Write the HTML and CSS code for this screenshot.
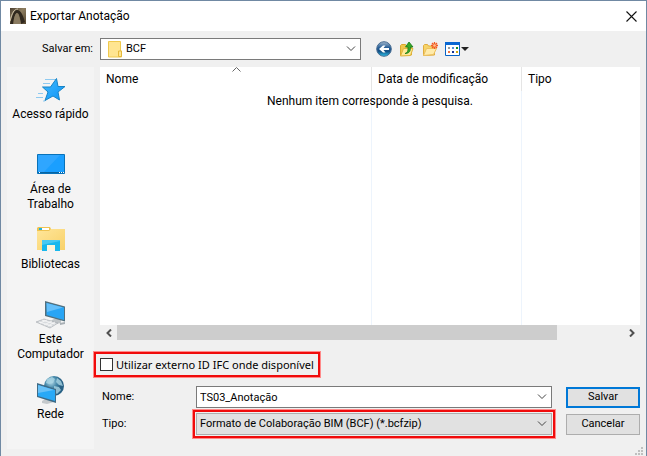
FILE: index.html
```html
<!DOCTYPE html>
<html lang="pt">
<head>
<meta charset="utf-8">
<meta name="viewport" content="width=device-width, initial-scale=1">
<title>Exportar Anotação</title>
<link rel="stylesheet" href="styles.css">
</head>
<body>
<form class="dialog">
  <header class="titlebar">
    <svg class="app-icon" width="16" height="16" viewBox="0 0 16 16" aria-hidden="true">
      <defs><linearGradient id="app" x1="0" x2="1" y1="0" y2="1"><stop offset="0" stop-color="#4a3f31"/><stop offset=".45" stop-color="#8d7d60"/><stop offset="1" stop-color="#54452f"/></linearGradient></defs>
      <path d="M0 0h16v16H0z" fill="url(#app)"/>
      <path d="M7 2c4 0 6 5 8 12l-4 2C10 9 9 5 7 5S4 10 3 16H0C2 8 4 2 7 2z" fill="#30281e"/>
      <path d="M0 13C2 5 4 1 8 1" fill="none" stroke="#d0c4aa"/>
      <path d="M7 5c2 2 3 6 4 11H4C4 10 5 6 7 5z" fill="#8a7b61"/>
    </svg>
    <h1 class="title">Exportar Anotação</h1>
    <button type="button" class="close" aria-label="Fechar">
      <svg width="11" height="11" viewBox="0 0 11 11"><path d="M.5.5l10 10M10.500.500l-10 10" fill="none" stroke="#111" stroke-width="1.100"/></svg>
    </button>
  </header>

  <div class="lookin">
    <label class="lookin-label" for="folder">Salvar em:</label>
    <div class="combo combo-folder">
      <svg class="folder-icon" width="14" height="17" viewBox="0 0 14 17" aria-hidden="true"><path d="M.5.5h12v9.500h1v6H.5z" fill="#ffe591" stroke="#efc94e"/><path d="M10.500 15.500V10h3v5.500z" fill="#ffe591" stroke="#e6b93a"/></svg>
      <select id="folder" class="field"><option>BCF</option></select>
      <svg class="chevron" width="10" height="6" viewBox="0 0 10 6" aria-hidden="true"><path d="M1 .5l4 4 4-4"/></svg>
    </div>
    <div class="tools">
      <button type="button" class="tool" aria-label="Voltar">
        <svg width="16" height="16" viewBox="0 0 16 16">
          <defs><linearGradient id="back" x2="0" y2="1"><stop offset="0" stop-color="#a4b8cc"/><stop offset=".4" stop-color="#285f98"/><stop offset=".65" stop-color="#124d82"/><stop offset="1" stop-color="#2cc4ec"/></linearGradient></defs>
          <circle cx="8" cy="8" r="7.300" fill="url(#back)" stroke="#476b91"/>
          <path d="M13 7H7.500l2-2.500H7L3 8l4 3.500h2.500L7.500 9H13z" fill="#fff"/>
        </svg>
      </button>
      <button type="button" class="tool" aria-label="Um nível acima">
        <svg width="16" height="16" viewBox="0 0 16 16">
          <path d="M1.500 14.500v-10l1-1h4l1 1.500h5v9z" fill="#f0c64b" stroke="#d8a92d"/>
          <path d="M1.500 15l3-7.500H14l-2.500 7z" fill="#ffe996" stroke="#dfb43d"/>
          <path d="M6 12.500c3-1 3-3 3-6.500H6.500L10 1l4 5h-2.500c0 4-1 6.500-5.500 6.500z" fill="#35a929" stroke="#187818" stroke-width=".8"/>
        </svg>
      </button>
      <button type="button" class="tool" aria-label="Criar nova pasta">
        <svg width="16" height="16" viewBox="0 0 16 16">
          <path d="M1.500 14.500v-10l1-1h3l1 1.500h6v9z" fill="#f6d469" stroke="#e0ac3f"/>
          <path d="M1.500 14.500l3-7h10l-3 6z" fill="#ffebab" stroke="#ecc160"/>
          <path d="M12.500 1v7M9 4.500h7M10 2l5 5M15 2l-5 5" stroke="#f25a22" stroke-width="1.300"/><circle cx="12.500" cy="4.500" r="1.300" fill="#ffc591"/>
        </svg>
      </button>
      <button type="button" class="tool tool-view" aria-label="Menu Exibir">
        <svg width="24" height="16" viewBox="0 0 24 16">
          <path d="M.5 1.500h14v13H.5z" fill="#fff" stroke="#0863c6"/><path d="M0 1h15v3H0z" fill="#0967d2"/>
          <path d="M3 6h2v2H3z" fill="#999"/><path d="M7 6h2v2H7z" fill="#508edc"/><path d="M11 6h2v2h-2z" fill="#148c28"/>
          <path d="M3 10h2v2H3z" fill="#ed7443"/><path d="M7 10h2v2H7z" fill="#163494"/><path d="M11 10h2v2h-2z" fill="#d2a90e"/>
          <path d="M16 6h8l-4 4z" fill="#222"/>
        </svg>
      </button>
    </div>
  </div>

  <div class="main">
    <nav class="places" aria-label="Locais">
      <button type="button" class="place">
        <svg width="32" height="32" viewBox="0 0 32 32" aria-hidden="true">
          <defs><linearGradient id="blue" x2="1" y2="1"><stop offset="0" stop-color="#45b9f7"/><stop offset=".5" stop-color="#27a7fb"/><stop offset="1" stop-color="#0d93f4"/></linearGradient></defs>
          <path d="M10 5.500h11M8 9.500h7M3 19.500h5M1 23.500h7M8 27h2" stroke="#8fcaf0"/>
          <path d="M21.500 4.500l1.500 8h7l-7 5.500 1.500 8-6.500-4-8 4.500 3-8.500-5.500-5h8z" fill="url(#blue)" stroke="#1784c6"/>
        </svg>
        <span>Acesso rápido</span>
      </button>
      <button type="button" class="place">
        <svg width="32" height="32" viewBox="0 0 32 32" aria-hidden="true">
          <path d="M2.500 5.500h27v19h-27z" fill="#1a9fff" stroke="#0872b9"/><path d="M3 6h22L9 23H3z" fill="#43adff" opacity=".5"/>
          <path d="M3 23h26v1H3z" fill="#0864a1"/><path d="M4 23h1v1H4zm20 0h1v1h-1zm2 0h1v1h-1zm2 0h1v1h-1z" fill="#fff"/>
        </svg>
        <span>Área de Trabalho</span>
      </button>
      <button type="button" class="place">
        <svg width="32" height="32" viewBox="0 0 32 32" aria-hidden="true">
          <defs><linearGradient id="lib" x2="1" y2="1"><stop offset="0" stop-color="#ffe69a"/><stop offset="1" stop-color="#f8d169"/></linearGradient></defs>
          <path d="M2 4l1-1h12l1 2h14v21H2z" fill="#efc351"/><path d="M4 4h10v2H4z" fill="#fff"/><path d="M4 4h3v2H4z" fill="#21b2de"/>
          <path d="M2 7h12l2-2h14v21H2z" fill="url(#lib)"/>
          <path d="M7 16h18v11h-5v-6h-8v6H7z" fill="#18b8ed"/><path d="M12 21h8v5h-8z" fill="#fff5d7"/><path d="M7 16h18v1L7 21z" fill="#48c9f2"/>
        </svg>
        <span>Bibliotecas</span>
      </button>
      <button type="button" class="place">
        <svg width="32" height="32" viewBox="0 0 32 32" aria-hidden="true">
          <path d="M15 22l6-3 5 2v3l-5 1z" fill="#bfc4c7"/>
          <path d="M10 2l20 5.500v15L10 17z" fill="#52707e"/><path d="M11.500 4L29 8.500v12.500L11.500 16z" fill="#28a5f5"/><path d="M11.500 4L28 8.500 12 13z" fill="#64bffa"/>
          <path d="M1 23l8-3 14 4-8 5z" fill="#d8dbde" stroke="#a2a8ac" stroke-width=".6"/><path d="M4 23l13 4M7 21l13 4M5 24l7-3M9 26l8-4M13 27l7-4" stroke="#f8f8f8" stroke-width=".8"/>
          <path d="M25 24l5-1v2l-5 1z" fill="#a8afb4"/>
        </svg>
        <span>Este Computador</span>
      </button>
      <button type="button" class="place">
        <svg width="32" height="32" viewBox="0 0 32 32" aria-hidden="true">
          <defs><radialGradient id="globe" cx=".35" cy=".3"><stop offset="0" stop-color="#b7dcea"/><stop offset=".6" stop-color="#4689aa"/><stop offset="1" stop-color="#286185"/></radialGradient></defs>
          <circle cx="19" cy="12" r="10" fill="url(#globe)"/>
          <path d="M12 5l5-2 3 2-2 4-4 1-3-1zm10-1l4 3 2 5-4-1-3-3zm-3 8l5 1 2 3-4 4-3-2z" fill="#a9d5e4" opacity=".8"/>
          <path d="M7 27l5-3 7 2v2l-7 2-5-1z" fill="#c4c9cc"/>
          <path d="M2 9l19 6v14L2 23z" fill="#3f6b86"/><path d="M3 11l17 5v11L3 22z" fill="#28a9f7"/><path d="M3 11l16 5L3 19z" fill="#68c1f7"/>
        </svg>
        <span>Rede</span>
      </button>
    </nav>

    <div class="content">
      <section class="files">
        <div class="list">
          <table class="table">
            <thead><tr><th class="col-name" scope="col">Nome</th><th class="col-date" scope="col">Data de modificação</th><th scope="col">Tipo</th></tr></thead>
            <tbody><tr><td></td><td></td><td></td></tr></tbody>
          </table>
          <svg class="sort" width="9" height="5" viewBox="0 0 9 5" aria-hidden="true"><path d="M.5 4.500l4-4 4 4" fill="none" stroke="#666"/></svg>
          <p class="empty">Nenhum item corresponde à pesquisa.</p>
        </div>
        <div class="scroll">
          <button type="button" class="scroll-btn" aria-label="Rolar para a esquerda"><svg width="6" height="8" viewBox="0 0 6 8"><path d="M5 .5L1.500 4 5 7.500"/></svg></button>
          <div class="track"><div class="thumb"></div></div>
          <button type="button" class="scroll-btn" aria-label="Rolar para a direita"><svg width="6" height="8" viewBox="0 0 6 8"><path d="M1 .5L4.500 4 1 7.500"/></svg></button>
        </div>
      </section>

      <label class="option mark"><input type="checkbox" class="check">Utilizar externo ID IFC onde disponível</label>

      <div class="fields">
        <label for="name">Nome:</label>
        <div class="combo combo-name">
          <input id="name" class="field" type="text" value="TS03_Anotação">
          <svg class="chevron" width="10" height="6" viewBox="0 0 10 6" aria-hidden="true"><path d="M1 .5l4 4 4-4"/></svg>
        </div>
        <button type="submit" class="btn btn-default">Salvar</button>
        <label for="type">Tipo:</label>
        <div class="mark mark-type">
          <div class="combo combo-grey">
            <select id="type" class="field"><option>Formato de Colaboração BIM (BCF) (*.bcfzip)</option></select>
            <svg class="chevron" width="10" height="6" viewBox="0 0 10 6" aria-hidden="true"><path d="M1 .5l4 4 4-4"/></svg>
          </div>
        </div>
        <button type="button" class="btn">Cancelar</button>
      </div>
    </div>
  </div>
  <svg class="grip" width="8" height="8" viewBox="0 0 8 8" aria-hidden="true"><path d="M6 0h2v2H6zM3 3h2v2H3zm3 0h2v2H6zM0 6h2v2H0zm3 0h2v2H3zm3 0h2v2H6z" fill="#bfbfbf"/></svg>
</form>
</body>
</html>
```
FILE: styles.css
```css
* { box-sizing: border-box; }

body { margin: 0; }

button, input, select {
  margin: 0;
  padding: 0;
  border: 0;
  border-radius: 0;
  background: none;
  color: inherit;
  font: inherit;
  appearance: none;
}

svg { display: block; flex: none; }

.dialog {
  position: relative;
  display: flex;
  flex-direction: column;
  min-height: 100vh;
  border: 1px solid #7089a3;
  background: #f0f0f0;
  color: #000;
  font: 11px/16px Roboto, sans-serif;
}

.titlebar {
  display: flex;
  align-items: center;
  gap: 4px;
  height: 30px;
  padding: 0 9px;
  background: #fff;
}

.title {
  flex: 1;
  margin: 0;
  font: 12px/16px Roboto, sans-serif;
}

.lookin {
  display: flex;
  align-items: center;
  padding: 7px 6px;
}

.lookin-label {
  width: 93px;
  padding-right: 7px;
  text-align: right;
}

.combo {
  position: relative;
  display: flex;
  align-items: center;
  height: 22px;
  border: 1px solid #7a7a7a;
  background: #fff;
}

.combo-folder { width: 261px; }

.combo-grey {
  border-color: #adadad;
  background: #e1e1e1;
}

.folder-icon {
  position: absolute;
  left: 7px;
  pointer-events: none;
}

.field {
  width: 100%;
  height: 100%;
  padding: 0 20px 0 3px;
}

.combo-folder .field { padding-left: 25px; }

.chevron {
  position: absolute;
  right: 4px;
  fill: none;
  stroke: #444;
  pointer-events: none;
}

.tools {
  display: flex;
  gap: 7px;
  margin-left: 15px;
}

.main {
  display: flex;
  flex: 1;
  gap: 6px;
  padding: 0 6px 8px;
}

.places {
  display: flex;
  flex-direction: column;
  width: 87px;
  padding-top: 7px;
  background: #f4f4f4;
  font: 12px/15px Roboto, sans-serif;
}

.place {
  display: flex;
  flex-direction: column;
  gap: 1px;
  align-items: center;
  height: 75px;
  text-align: center;
}

.content {
  display: flex;
  flex: 1;
  flex-direction: column;
  min-width: 0;
  padding-bottom: 11px;
}

.files {
  display: flex;
  flex: 1;
  flex-direction: column;
}

.list {
  position: relative;
  display: flex;
  flex: 1;
  background: #fff;
  font: 12px/16px Roboto, sans-serif;
}

.table {
  width: 100%;
  border-spacing: 0;
  table-layout: fixed;
}

.table th {
  height: 24px;
  padding: 0 6px;
  border-right: 1px solid #e5e5e5;
  font-weight: 400;
  text-align: left;
}

.table td {
  padding: 0;
  border-right: 1px solid #edf4fc;
}

.table th:last-child, .table td:last-child { border-right: 0; }

.col-name { width: 272px; }
.col-date { width: 150px; }

.sort {
  position: absolute;
  top: 0;
  left: 132px;
}

.empty {
  position: absolute;
  top: 26px;
  left: 0;
  width: 100%;
  margin: 0;
  text-align: center;
}

.scroll {
  display: flex;
  height: 15px;
}

.scroll-btn {
  display: flex;
  align-items: center;
  justify-content: center;
  width: 17px;
}

.scroll-btn path {
  fill: none;
  stroke: #505050;
  stroke-width: 2;
}

.track { flex: 1; }

.thumb {
  width: 87%;
  height: 100%;
  background: #cdcdcd;
}

.mark {
  border: 2px solid #f00b0b;
  outline: 1px solid #ff8a8a;
}

.option {
  display: flex;
  align-items: center;
  align-self: flex-start;
  gap: 3px;
  height: 25px;
  margin: 12px 0 9px -6px;
  padding: 0 4px;
  font: 11px/16px "Noto Sans", sans-serif;
}

.check {
  width: 13px;
  height: 13px;
  border: 1px solid #333;
  background: #fff;
}

.check:checked { background: #0078d7; }

.fields {
  display: grid;
  grid-template-columns: 93px 1fr 74px;
  row-gap: 2px;
  align-items: center;
}

.fields label { padding-left: 2px; }

.combo-name { margin: 0 14px 0 3px; }

.mark-type {
  margin-right: 11px;
  padding: 1px;
}

.btn {
  height: 21px;
  border: 1px solid #adadad;
  background: #e1e1e1;
}

.btn-default { border: 2px solid #0078d7; }

.grip {
  position: absolute;
  right: 3px;
  bottom: 2px;
}
```
